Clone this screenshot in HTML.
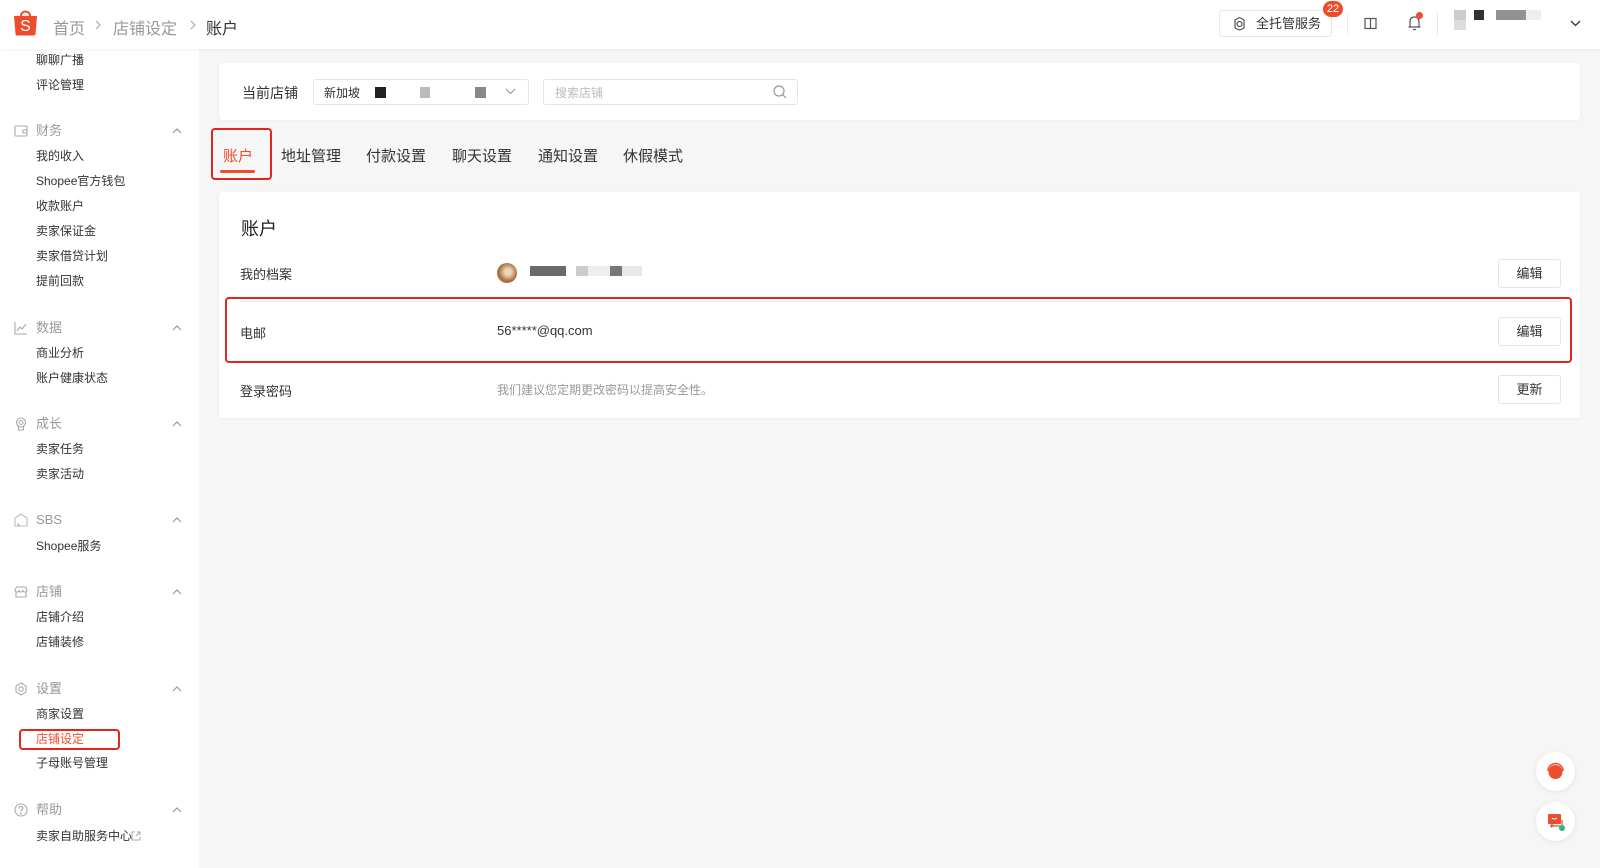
<!DOCTYPE html>
<html><head><meta charset="utf-8">
<style>
*{margin:0;padding:0;box-sizing:border-box}
body{width:1600px;height:868px;overflow:hidden;background:#f6f6f6;font-family:"Liberation Sans","Noto Sans CJK SC",sans-serif;color:#333;position:relative}
.a{position:absolute;white-space:nowrap}
#hdr{position:absolute;left:0;top:0;width:1600px;height:49px;background:#fff;box-shadow:0 1px 3px rgba(0,0,0,.06);z-index:2}
#side{position:absolute;left:0;top:49px;width:199px;height:819px;background:#fff}
.it,.gh,.lbl,.tab{white-space:nowrap}
.it{position:absolute;left:36px;font-size:12px;color:#333;line-height:14px;transform:translateY(-7px)}
.gh{position:absolute;left:36px;font-size:13px;color:#999;line-height:14px;transform:translateY(-7px)}
.gi{position:absolute;left:14px;width:14px;height:14px;transform:translateY(-7px)}
.ch{position:absolute;left:171px;width:12px;height:8px;transform:translateY(-4px)}
.card{position:absolute;background:#fff;border-radius:4px;box-shadow:0 1px 3px rgba(0,0,0,.04)}
.tab{position:absolute;top:154px;font-size:15px;color:#333;transform:translateY(-9px)}
.lbl{position:absolute;left:240px;font-size:13px;color:#333;transform:translateY(-8px)}
.btn{position:absolute;left:1498px;width:63px;height:29px;border:1px solid #e5e5e5;border-radius:3px;background:#fff;font-size:13px;text-align:center;line-height:27px;color:#333}
.blk{position:absolute;height:10px}
</style></head><body>
<div id="hdr">
 <svg class="a" style="left:13px;top:9px" width="25" height="27" viewBox="0 0 25 27"><path d="M8 7 C8 1 17 1 17 7" fill="none" stroke="#ee4d2d" stroke-width="2"/><path d="M1 7 H24 L22.5 25 Q22.3 26.5 21 26.5 H4 Q2.7 26.5 2.5 25 Z" fill="#ee4d2d"/><text x="12.5" y="22" text-anchor="middle" font-size="16" fill="#fff" font-family="Liberation Sans">S</text></svg>
 <div class="a" style="left:53px;top:15px;font-size:16px;color:#999">首页</div>
 <svg class="a" style="left:95px;top:20px" width="6" height="10" viewBox="0 0 6 10" fill="none" stroke="#aaa" stroke-width="1.2"><path d="M1 1 L5 5 L1 9"/></svg>
 <div class="a" style="left:113px;top:15px;font-size:16px;color:#999">店铺设定</div>
 <svg class="a" style="left:190px;top:20px" width="6" height="10" viewBox="0 0 6 10" fill="none" stroke="#aaa" stroke-width="1.2"><path d="M1 1 L5 5 L1 9"/></svg>
 <div class="a" style="left:206px;top:15px;font-size:16px;color:#333">账户</div>
 <div class="a" style="left:1219px;top:10px;width:113px;height:27px;border:1px solid #e8e8e8;border-radius:3px;font-size:13px;line-height:25px;padding-left:36px;color:#333">全托管服务</div>
 <svg class="a" style="left:1232px;top:16px" width="15" height="15" viewBox="0 0 15 15" fill="none" stroke="#555" stroke-width="1.2"><path d="M3 4 L7.5 1.5 L12 4 V12 L7.5 14 L3 12 Z"/><circle cx="7.5" cy="8" r="2.5"/></svg>
 <div class="a" style="left:1323px;top:1px;width:20px;height:16px;border-radius:8px;background:#ee4d2d;color:#fff;font-size:11px;text-align:center;line-height:16px">22</div>
 <div class="a" style="left:1347px;top:13px;width:1px;height:22px;background:#e8e8e8"></div>
 <svg class="a" style="left:1364px;top:17px" width="13" height="13" viewBox="0 0 13 13" fill="none" stroke="#555" stroke-width="1.2"><rect x="1" y="1.5" width="11" height="10"/><path d="M6.5 1.5 V11.5"/></svg>
 <svg class="a" style="left:1407px;top:14px" width="15" height="18" viewBox="0 0 15 18" fill="none" stroke="#555" stroke-width="1.2"><path d="M3 13 V8 Q3 3 7.5 3 Q12 3 12 8 V13 H1.5 H13.5"/><path d="M6 15.5 H9"/></svg>
 <div class="a" style="left:1416px;top:12px;width:7px;height:7px;border-radius:50%;background:#ee4d2d"></div>
 <div class="a" style="left:1437px;top:13px;width:1px;height:22px;background:#e8e8e8"></div>
 <div class="a" style="left:1454px;top:10px;width:12px;height:10px;background:#ccc"></div>
 <div class="a" style="left:1454px;top:20px;width:12px;height:10px;background:#ddd"></div>
 <div class="a" style="left:1474px;top:10px;width:10px;height:10px;background:#333"></div>
 <div class="a" style="left:1496px;top:10px;width:30px;height:10px;background:#777;opacity:.8"></div>
 <div class="a" style="left:1526px;top:10px;width:15px;height:10px;background:#eee"></div>
 <svg class="a" style="left:1570px;top:20px" width="11" height="7" viewBox="0 0 11 7" fill="none" stroke="#333" stroke-width="1.3"><path d="M1 1 L5.5 5.5 L10 1"/></svg>
</div>

<div id="side"></div>
<div style="position:absolute;left:0;top:0;width:200px;height:868px">
<svg width="0" height="0" style="position:absolute"><defs><symbol id="up" viewBox="0 0 12 8"><path d="M2 6 L6 2 L10 6" fill="none" stroke="#999" stroke-width="1.2"/></symbol></defs></svg>
<div class="it" style="top:60px">聊聊广播</div>
<div class="it" style="top:85px">评论管理</div>

<svg class="gi" style="top:131px" viewBox="0 0 14 14" fill="none" stroke="#aaa" stroke-width="1.1"><rect x="1" y="2" width="12" height="10" rx="1"/><path d="M9 6 H13 V9 H9 Z"/></svg>
<div class="gh" style="top:131px">财务</div><svg class="ch" style="top:131px"><use href="#up"/></svg>
<div class="it" style="top:156px">我的收入</div>
<div class="it" style="top:181px">Shopee官方钱包</div>
<div class="it" style="top:206px">收款账户</div>
<div class="it" style="top:231px">卖家保证金</div>
<div class="it" style="top:256px">卖家借贷计划</div>
<div class="it" style="top:281px">提前回款</div>

<svg class="gi" style="top:328px" viewBox="0 0 14 14" fill="none" stroke="#aaa" stroke-width="1.1"><path d="M1 1 V13 H13"/><path d="M3 10 L6 6 L8 8 L12 3"/></svg>
<div class="gh" style="top:328px">数据</div><svg class="ch" style="top:328px"><use href="#up"/></svg>
<div class="it" style="top:353px">商业分析</div>
<div class="it" style="top:378px">账户健康状态</div>

<svg class="gi" style="top:424px" viewBox="0 0 14 14" fill="none" stroke="#aaa" stroke-width="1.1"><circle cx="7" cy="5.5" r="4.5"/><circle cx="7" cy="5.5" r="2"/><path d="M4.5 9.5 V13 H9.5 V9.5"/></svg>
<div class="gh" style="top:424px">成长</div><svg class="ch" style="top:424px"><use href="#up"/></svg>
<div class="it" style="top:449px">卖家任务</div>
<div class="it" style="top:474px">卖家活动</div>

<svg class="gi" style="top:520px" viewBox="0 0 14 14" fill="none" stroke="#bbb" stroke-width="1.1"><path d="M1 13 V5 L7 1 L13 5 V13 Z"/><path d="M4 10 V12 H6"/></svg>
<div class="gh" style="top:520px">SBS</div><svg class="ch" style="top:520px"><use href="#up"/></svg>
<div class="it" style="top:546px">Shopee服务</div>

<svg class="gi" style="top:592px" viewBox="0 0 14 14" fill="none" stroke="#aaa" stroke-width="1.1"><path d="M1 5 L2.5 2 H11.5 L13 5 Q13 7 11 7 Q9 7 9 5 Q9 7 7 7 Q5 7 5 5 Q5 7 3 7 Q1 7 1 5"/><path d="M2 7 V12 H12 V7"/></svg>
<div class="gh" style="top:592px">店铺</div><svg class="ch" style="top:592px"><use href="#up"/></svg>
<div class="it" style="top:617px">店铺介绍</div>
<div class="it" style="top:642px">店铺装修</div>

<svg class="gi" style="top:689px" viewBox="0 0 14 14" fill="none" stroke="#aaa" stroke-width="1.1"><path d="M7 1 L12 4 V10 L7 13 L2 10 V4 Z"/><circle cx="7" cy="7" r="2.2"/></svg>
<div class="gh" style="top:689px">设置</div><svg class="ch" style="top:689px"><use href="#up"/></svg>
<div class="it" style="top:714px">商家设置</div>
<div class="a" style="left:19px;top:729px;width:101px;height:21px;border:2px solid #e3261b;border-radius:4px"></div>
<div class="it" style="top:739px;color:#ee4d2d">店铺设定</div>
<div class="it" style="top:763px">子母账号管理</div>

<svg class="gi" style="top:810px" viewBox="0 0 14 14" fill="none" stroke="#aaa" stroke-width="1.1"><circle cx="7" cy="7" r="6"/><path d="M5 5.5 Q5 3.5 7 3.5 Q9 3.5 9 5.3 Q9 6.5 7 7.3 V8.5"/><circle cx="7" cy="10.5" r=".4"/></svg>
<div class="gh" style="top:810px">帮助</div><svg class="ch" style="top:810px"><use href="#up"/></svg>
<div class="it" style="top:836px">卖家自助服务中心</div>
<svg class="a" style="left:131px;top:831px" width="10" height="10" viewBox="0 0 10 10" fill="none" stroke="#aaa" stroke-width="1"><path d="M4 1 H1 V9 H9 V6 M6 1 H9 V4 M9 1 L5 5"/></svg>
</div>

<div class="card" style="left:219px;top:63px;width:1361px;height:57px"></div>
<div class="a" style="left:242px;top:83px;font-size:14px;color:#333">当前店铺</div>
<div class="a" style="left:313px;top:79px;width:216px;height:26px;border:1px solid #e5e5e5;border-radius:3px;background:#fff"></div>
<div class="a" style="left:324px;top:84px;font-size:12px;color:#333">新加坡</div>
<div class="a" style="left:375px;top:87px;width:11px;height:11px;background:#222"></div>
<div class="a" style="left:420px;top:87px;width:10px;height:11px;background:#bbb"></div>
<div class="a" style="left:475px;top:87px;width:11px;height:11px;background:#888"></div>
<svg class="a" style="left:505px;top:88px" width="11" height="7" viewBox="0 0 11 7" fill="none" stroke="#999" stroke-width="1.1"><path d="M1 1 L5.5 5.5 L10 1"/></svg>
<div class="a" style="left:543px;top:79px;width:255px;height:26px;border:1px solid #e5e5e5;border-radius:3px;background:#fff"></div>
<div class="a" style="left:555px;top:84px;font-size:12px;color:#bbb">搜索店铺</div>
<svg class="a" style="left:773px;top:85px" width="14" height="14" viewBox="0 0 14 14" fill="none" stroke="#999" stroke-width="1.2"><circle cx="6" cy="6" r="5"/><path d="M9.7 9.7 L13 13"/></svg>

<div class="a" style="left:211px;top:128px;width:61px;height:52px;border:2px solid #e3261b;border-radius:4px"></div>
<div class="tab" style="left:223px;color:#ee4d2d">账户</div>
<div class="a" style="left:220px;top:170px;width:35px;height:3px;background:#ee4d2d;border-radius:2px"></div>
<div class="tab" style="left:281px">地址管理</div>
<div class="tab" style="left:366px">付款设置</div>
<div class="tab" style="left:452px">聊天设置</div>
<div class="tab" style="left:538px">通知设置</div>
<div class="tab" style="left:623px">休假模式</div>

<div class="card" style="left:219px;top:192px;width:1361px;height:226px"></div>
<div class="a" style="left:241px;top:215px;font-size:18px;color:#222">账户</div>
<div class="lbl" style="top:272px">我的档案</div>
<div class="a" style="left:497px;top:263px;width:20px;height:20px;border-radius:50%;background:radial-gradient(circle at 55% 45%,#e9d7b5 20%,#a86a3c 60%,#d8a070)"></div>
<div class="blk" style="left:530px;top:266px;width:36px;background:#6a6a6a"></div>
<div class="blk" style="left:576px;top:266px;width:12px;background:#ccc"></div>
<div class="blk" style="left:588px;top:266px;width:22px;background:#eee"></div>
<div class="blk" style="left:610px;top:266px;width:12px;background:#777"></div>
<div class="blk" style="left:622px;top:266px;width:20px;background:#e8e8e8"></div>
<div class="btn" style="top:259px">编辑</div>
<div class="a" style="left:240px;top:301px;width:1324px;height:1px;background:#eee"></div>
<div class="a" style="left:225px;top:297px;width:1347px;height:66px;border:2px solid #e3261b;border-radius:4px"></div>
<div class="lbl" style="top:331px">电邮</div>
<div class="a" style="left:497px;top:323px;font-size:13px;color:#333">56*****@qq.com</div>
<div class="btn" style="top:317px">编辑</div>
<div class="lbl" style="top:389px">登录密码</div>
<div class="a" style="left:497px;top:381px;font-size:12px;color:#999">我们建议您定期更改密码以提高安全性。</div>
<div class="btn" style="top:375px">更新</div>

<div class="a" style="left:1536px;top:752px;width:39px;height:39px;border-radius:50%;background:#fff;box-shadow:0 1px 6px rgba(0,0,0,.08)"></div>
<svg class="a" style="left:1545px;top:761px" width="21" height="21" viewBox="0 0 21 21"><circle cx="10.5" cy="11" r="7" fill="#ee4d2d"/><path d="M3 10 A7.5 7.5 0 0 1 18 10" fill="none" stroke="#ee4d2d" stroke-width="1.5"/></svg>
<div class="a" style="left:1536px;top:802px;width:39px;height:39px;border-radius:50%;background:#fff;box-shadow:0 1px 6px rgba(0,0,0,.08)"></div>
<svg class="a" style="left:1546px;top:812px" width="20" height="20" viewBox="0 0 20 20"><rect x="2" y="2" width="13" height="10" rx="1" fill="#ee4d2d"/><path d="M5 12 V16 L8 13" fill="#ee4d2d"/><path d="M6 6 Q8.5 8 11 6" stroke="#fff" fill="none" stroke-width="1"/><path d="M4 14 H16 V8" stroke="#ee4d2d" fill="none" stroke-width="1.3"/><circle cx="16" cy="16" r="3" fill="#2db87d"/></svg>
</body></html>
